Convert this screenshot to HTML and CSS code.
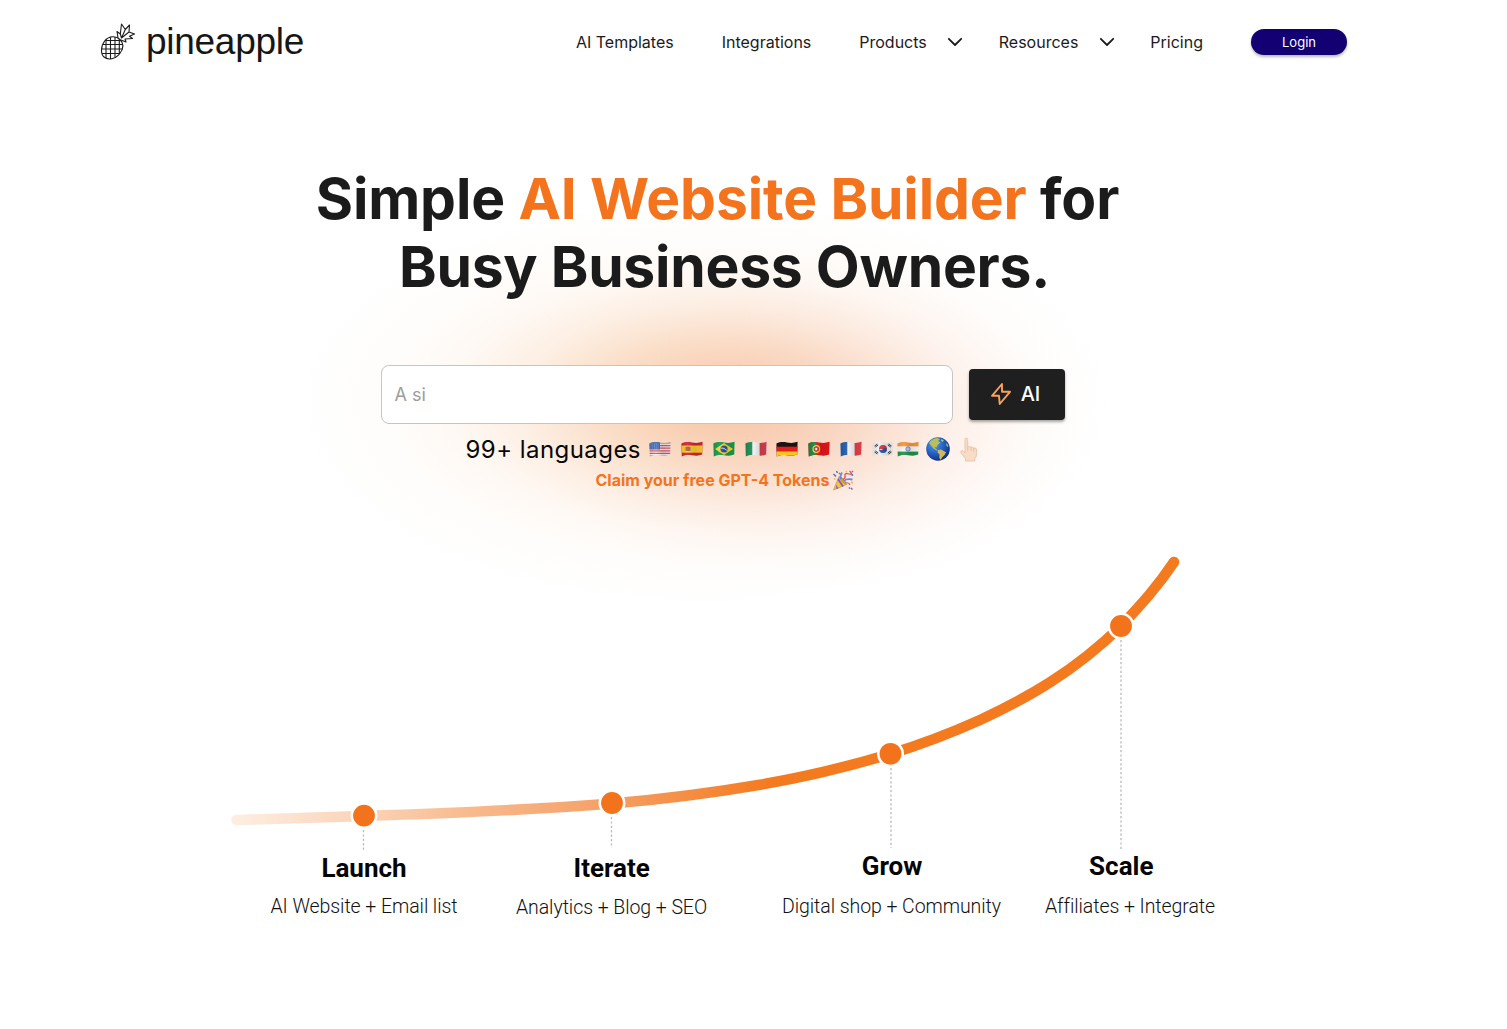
FILE: index.html
```html
<!DOCTYPE html>
<html lang="en">
<head>
<meta charset="utf-8">
<title>pineapple - AI Website Builder</title>
<link rel="stylesheet" href="styles.css">
</head>
<body>
<svg class="defs" width="0" height="0" aria-hidden="true">
  <defs>
    <clipPath id="wave"><path d="M0.4 2.4C4 .8 7.500 .8 11 1.500S18 2.100 21.600 .8L21.200 13.600C18 15 15 14.900 11 14.300S4.500 13.900 .8 15.400Z"/></clipPath>
    <linearGradient id="shade"><stop offset="0" stop-color="#000" stop-opacity=".08"/><stop offset=".3" stop-color="#fff" stop-opacity=".08"/><stop offset=".6" stop-color="#000" stop-opacity=".1"/><stop offset="1" stop-color="#000" stop-opacity=".04"/></linearGradient>
  </defs>
</svg>
<header class="header">
  <a class="logo">
    <svg class="logo-mark" width="36" height="38" viewBox="0 0 36 38" fill="none" stroke="#1c1c1c" stroke-width="1.1" stroke-linejoin="round">
      <path d="M5 17.500C9 13 16 12.500 20 16.500C24 20.500 23.500 26 19.500 31C15.500 36 8 37.500 4 34C.5 31 .5 23 5 17.500Z"/>
      <path d="M5 17.500H21M2.500 21.500H23M1.500 26H22.500M2 30.500H20M6 16.500V35M10.500 14.500V36M15 14V34.500M19.300 16V31"/>
      <path d="M18 15L17 8.500L20.300 11L21.500 1L25.300 6.500L29.500 2L29 9L34.500 11L29.500 13.200L32.500 15.500L25 16L26 19L21 17M20.300 11L21.500 15L25.300 6.500M21.500 15L29 9"/>
    </svg>
    <span class="logo-name">pineapple</span>
  </a>
  <nav class="nav">
    <a>AI Templates</a>
    <a>Integrations</a>
    <a class="has-menu">Products <svg class="chevron" width="16" height="10" viewBox="0 0 16 10"><path d="M1.800 1.800L8 8L14.200 1.800"/></svg></a>
    <a class="has-menu second">Resources <svg class="chevron" width="16" height="10" viewBox="0 0 16 10"><path d="M1.800 1.800L8 8L14.200 1.800"/></svg></a>
    <a>Pricing</a>
    <a class="login">Login</a>
  </nav>
</header>
<main class="main">
<section class="hero">
  <h1 class="headline"><span class="line first">Simple <em>AI Website Builder</em> for</span><span class="line last">Busy Business Owners.</span></h1>
  <form class="prompt">
    <div class="prompt-field">A si</div>
    <div class="prompt-button"><svg width="22" height="24" viewBox="0 0 22 24" fill="none" stroke="#f6a25c" stroke-width="1.900" stroke-linejoin="round"><path d="M12 2L2 13.800H9L9.700 22L20 9.800H12Z"/></svg><span>AI</span></div>
  </form>
  <div class="languages">
    <span class="languages-text">99+ languages</span>
    <svg class="flag" viewBox="0 0 22 16"><g clip-path="url(#wave)"><rect width="22" height="16" fill="#f3e9ea"/><path d="M0 2H22M0 4.600H22M0 7.200H22M0 9.800H22M0 12.400H22M0 15H22" stroke="#cf5965" stroke-width="1.200"/><rect width="11" height="8.500" fill="#3f68b0"/><path d="M1.500 3H10M1.500 5H10M1.500 7H10" stroke="#c5d3ec" stroke-width=".6" stroke-dasharray=".8 1"/><rect width="22" height="16" fill="url(#shade)"/></g></svg>
    <svg class="flag" viewBox="0 0 22 16"><g clip-path="url(#wave)"><rect width="22" height="16" fill="#c92532"/><rect y="4.500" width="22" height="7.200" fill="#fbc82b"/><rect x="5" y="5.500" width="4" height="4.500" rx="1" fill="#b65a37"/><path d="M4.300 6V10M9.700 6V10" stroke="#9a8562" stroke-width=".8"/><rect width="22" height="16" fill="url(#shade)"/></g></svg>
    <svg class="flag" viewBox="0 0 22 16"><g clip-path="url(#wave)"><rect width="22" height="16" fill="#15994d"/><path d="M11 2L20 8L11 14L2 8Z" fill="#f8d52e"/><circle cx="11" cy="8" r="3.600" fill="#26519c"/><path d="M7.700 7Q11 6.500 14.200 9.500" fill="none" stroke="#fff" stroke-width=".8"/><rect width="22" height="16" fill="url(#shade)"/></g></svg>
    <svg class="flag" viewBox="0 0 22 16"><g clip-path="url(#wave)"><rect width="22" height="16" fill="#f5f5f5"/><rect width="7.300" height="16" fill="#1b8a50"/><rect x="14.600" width="8" height="16" fill="#ce4050"/><rect width="22" height="16" fill="url(#shade)"/></g></svg>
    <svg class="flag" viewBox="0 0 22 16"><g clip-path="url(#wave)"><rect width="22" height="16" fill="#171414"/><rect y="5.700" width="22" height="5" fill="#e71d1b"/><rect y="10.400" width="22" height="6" fill="#fbc719"/></g></svg>
    <svg class="flag" viewBox="0 0 22 16"><g clip-path="url(#wave)"><rect width="22" height="16" fill="#e5161b"/><rect width="8.300" height="16" fill="#168441"/><circle cx="8.300" cy="8" r="3.300" fill="none" stroke="#f5d132" stroke-width="1.200"/><rect x="6.800" y="6.300" width="3" height="3.500" rx="1" fill="#ece8e7" stroke="#d92122"/><rect width="22" height="16" fill="url(#shade)"/></g></svg>
    <svg class="flag" viewBox="0 0 22 16"><g clip-path="url(#wave)"><rect width="22" height="16" fill="#f5f5f7"/><rect width="7.300" height="16" fill="#1f5aa8"/><rect x="14.600" width="8" height="16" fill="#e5404a"/><rect width="22" height="16" fill="url(#shade)"/></g></svg>
    <svg class="flag" viewBox="0 0 22 16"><g clip-path="url(#wave)"><rect width="22" height="16" fill="#efefef"/><path d="M7 8A4 4 0 0 1 15 8Z" fill="#d83445"/><path d="M7 8A4 4 0 0 0 15 8Q13 6 11 8T7 8Z" fill="#2459a5"/><path d="M2.500 5L5.500 3M3.300 6.100L6.200 4.100M16.500 3L19.500 5M15.800 4.100L18.700 6.100M2.500 11L5.500 13M3.300 9.900L6.200 11.900M16.500 13L19.500 11M15.800 11.900L18.700 9.900" stroke="#333" stroke-width="1"/><rect width="22" height="16" fill="url(#shade)"/></g></svg>
    <svg class="flag india" viewBox="0 0 22 16"><g clip-path="url(#wave)"><rect width="22" height="16" fill="#f7f4f2"/><rect width="22" height="5.300" fill="#f5953b"/><rect y="10.600" width="22" height="6" fill="#1e9147"/><circle cx="11" cy="8" r="2.200" fill="#bcc5e4" stroke="#5867ac" stroke-width=".7"/><rect width="22" height="16" fill="url(#shade)"/></g></svg>
    <svg class="globe" width="24" height="24" viewBox="0 0 24 24"><defs><radialGradient id="sea" cx=".35" cy=".3" r=".75"><stop offset="0" stop-color="#4f9bf0"/><stop offset=".5" stop-color="#2563c9"/><stop offset="1" stop-color="#122b79"/></radialGradient></defs><circle cx="12" cy="12" r="11.800" fill="url(#sea)"/><path d="M3 6Q6 1.500 11 1L14 2L12 4L14.500 5.500L11.500 8L10.800 10.200L8.500 10L10 12L12 13.200L10.500 13.500L7.500 11.500L4.500 8Z" fill="#b9bf58"/><path d="M12 13L15 12.500L20 15.300L18.500 18L16 20.500L14.800 23L13.300 21L13.500 17.500L11.500 15.500Z" fill="#d4b757"/><path d="M15.500 2L18 3.500L16.500 5L14.800 3.500ZM20.500 6L22.500 9L21.500 10L20 8Z" fill="#a6bd66"/></svg>
    <svg class="hand" width="18" height="25" viewBox="0 0 18 25" fill="#f9dcc6" stroke="#e6b79b" stroke-width=".7" stroke-linejoin="round"><path d="M5 14V2.500Q5 1 6.300 1T7.700 2.500V10Q9.500 9 11 10.200Q12.700 9.500 13.700 11Q16.600 10.400 16.600 13V17.500Q16.500 20 14.800 21.500V24H5.500V21.500L1 16Q.2 13.500 2.200 13.600Q3.300 13.700 5 16Z"/><path d="M7.700 10V14M11 10.200V14M13.700 11V14.500" fill="none"/></svg>
  </div>
  <div class="claim"><span>Claim your free GPT-4 Tokens</span>
    <svg width="22" height="21" viewBox="0 0 22 21"><path d="M1.500 20L7 6.500Q12 8 14.500 14.500Z" fill="#f3c43c" stroke="#b88a35" stroke-width=".6"/><path d="M5.500 10L10.300 17L11.800 16L6.400 8ZM3.800 14.500L6.500 18.500L4.500 19Z" fill="#8e57b5"/><ellipse cx="10.700" cy="10.500" rx="1.600" ry="5" transform="rotate(-42 10.700 10.500)" fill="#d19a35"/><path d="M9 9Q8 5 10 2.500M12 11Q14 8.500 20.500 9.500" fill="none" stroke="#5d8dde" stroke-width="1.800"/><path d="M11 9.500Q14 8 13 5.500T17 4T17.500 1M13.500 13Q17 12 18 15" fill="none" stroke="#d84c69" stroke-width="1.200"/><path d="M1.500 4L4 6.500M4.500 1L5.500 3M19.500 5.500L21 4.500M17 18.500L18 17.500" stroke="#5276cd" stroke-width="1.600"/><path d="M2 8.500L3.500 9.500M14 1L14.800 2.500M19 12L21 13" stroke="#e9b943" stroke-width="1.500"/><path d="M7 3L8 4M20 1L21 2M19 18L20.500 19.500" stroke="#a355af" stroke-width="1.500"/></svg>
  </div>
</section>
<section class="growth">
  <svg class="growth-chart" width="1010" height="390" viewBox="220 545 1010 390">
    <defs><linearGradient id="trail" gradientUnits="userSpaceOnUse" x1="231" y1="0" x2="770" y2="0"><stop offset="0" stop-color="#fdeee3"/><stop offset=".23" stop-color="#fbd5ba"/><stop offset=".45" stop-color="#f8b98c"/><stop offset=".7" stop-color="#f5a065"/><stop offset="1" stop-color="#f47a20"/></linearGradient></defs>
    <path class="curve" d="M236.500 820C278.700 818.700 321.300 817.400 364 816C446.700 813.300 529.300 810.100 612 803.500C661.300 799.300 710.700 793.100 760 784.700C803.300 777.400 846.700 767 890 754C920 744.800 950 733.500 980 720C1027 698 1074 672 1121 626C1138.700 607 1156.300 588.500 1174 562"/>
    <path class="drop" d="M363.500 830V850M611.500 817V848M891 768V848M1121 640V850"/>
    <g class="point"><circle cx="364" cy="815.600" r="12.200"/><circle cx="612" cy="803" r="12.200"/><circle cx="890.500" cy="753.800" r="12.200"/><circle cx="1121" cy="626" r="12.200"/></g>
    <g class="stage"><text x="364" y="876.500">Launch</text><text x="611.700" y="876.500">Iterate</text><text x="892" y="874.500">Grow</text><text x="1121.300" y="874.500">Scale</text></g>
    <g class="detail"><text x="364" y="913">AI Website + Email list</text><text x="611.500" y="914">Analytics + Blog + SEO</text><text x="891.500" y="913">Digital shop + Community</text><text x="1130" y="913">Affiliates + Integrate</text></g>
  </svg>
</section>
</main>
</body>
</html>
```

FILE: styles.css
```css
* { box-sizing: border-box; }
body { margin: 0; background: #fff; color: #1b1b1b; font-family: Inter, sans-serif; height: 1029px; overflow: hidden; }
.defs { position: absolute; }
.header { height: 84px; padding: 0 160px 0 100px; display: flex; align-items: center; justify-content: space-between; }
.logo { display: flex; align-items: center; gap: 10px; }
.logo-name { font: 37px/44px "Liberation Sans", Arial, sans-serif; letter-spacing: -.27px; color: #161616; }
.nav { display: flex; align-items: center; gap: 48px; font-size: 16px; letter-spacing: 0; }
.has-menu { display: flex; align-items: center; gap: 20.5px; }
.has-menu.second { margin-left: -12.5px; }
.has-menu + a:not(.second) { margin-left: -12.5px; }
.chevron { fill: none; stroke: #1b1b1b; stroke-width: 1.8; stroke-linecap: round; stroke-linejoin: round; }
.login { width: 96px; height: 26px; border-radius: 13px; background: #130073; color: #fff; font-size: 13px; line-height: 26px; text-align: center; letter-spacing: 0; box-shadow: 0 2px 3px rgba(0,0,0,.28); }
.main {
  height: 945px;
  background:
    radial-gradient(ellipse 290px 175px at 805px 335px, rgba(234,105,65,.14), rgba(234,105,65,.125) 18%, rgba(234,105,65,.09) 36%, rgba(234,105,65,.052) 54%, rgba(234,105,65,.02) 74%, rgba(234,105,65,.005) 90%, transparent),
    radial-gradient(ellipse 410px 205px at 705px 318px, rgba(240,145,65,.4), rgba(240,145,65,.35) 14%, rgba(240,145,65,.25) 30%, rgba(240,145,65,.14) 46%, rgba(240,145,65,.06) 62%, rgba(240,145,65,.018) 80%, transparent);
}
.hero { height: 461px; padding-top: 81px; }
.headline { margin: 0; font-size: 57px; line-height: 68px; font-weight: 700; letter-spacing: -.13px; }
.headline em { font-style: normal; color: #f4741d; }
.line { display: block; white-space: nowrap; text-align: center; }
.first { margin-right: 72px; }
.last { margin-right: 58px; letter-spacing: -.25px; }
.prompt { margin: 64px 0 0 381px; display: flex; align-items: center; gap: 16px; }
.prompt-field { width: 572px; height: 59px; border: 1px solid #c5c5c5; border-radius: 8px; background: #fff; padding: 0 12.5px; font-size: 18px; line-height: 58px; color: #9c9c9c; }
.prompt-button { width: 96px; height: 51px; padding: 0 4px 2px 0; border-radius: 4px; background: #1f1f1f; color: #fff; display: flex; align-items: center; justify-content: center; gap: 9px; font-size: 20px; font-weight: 500; box-shadow: 0 2px 3px rgba(0,0,0,.35); }
.languages { height: 36px; margin: 7px 0 0 465.5px; display: flex; align-items: center; gap: 9.8px; color: #080808; }
.languages-text { width: 174px; white-space: nowrap; font-size: 24px; letter-spacing: .45px; }
.flag { width: 22px; height: 16px; flex: none; }
.india { margin-left: -7px; }
.globe { margin-left: -2px; }
.claim { height: 24px; margin: 1px 0 0 595.5px; display: flex; align-items: center; gap: 3px; font-size: 16px; font-weight: 700; color: #f4741d; }
.growth { padding-left: 220px; }
.growth-chart { display: block; }
.curve { fill: none; stroke: url(#trail); stroke-width: 10.6; stroke-linecap: round; }
.drop { stroke: #b9b9b9; stroke-width: 1.3; stroke-dasharray: 2.2 2.2; }
.point { fill: #f3731d; stroke: #fff; stroke-width: 2.6; }
.stage { font: 700 26px Roboto, sans-serif; fill: #050505; text-anchor: middle; }
.detail { font: 300 19.5px Roboto, sans-serif; letter-spacing: -.07px; fill: #111; text-anchor: middle; }
```
